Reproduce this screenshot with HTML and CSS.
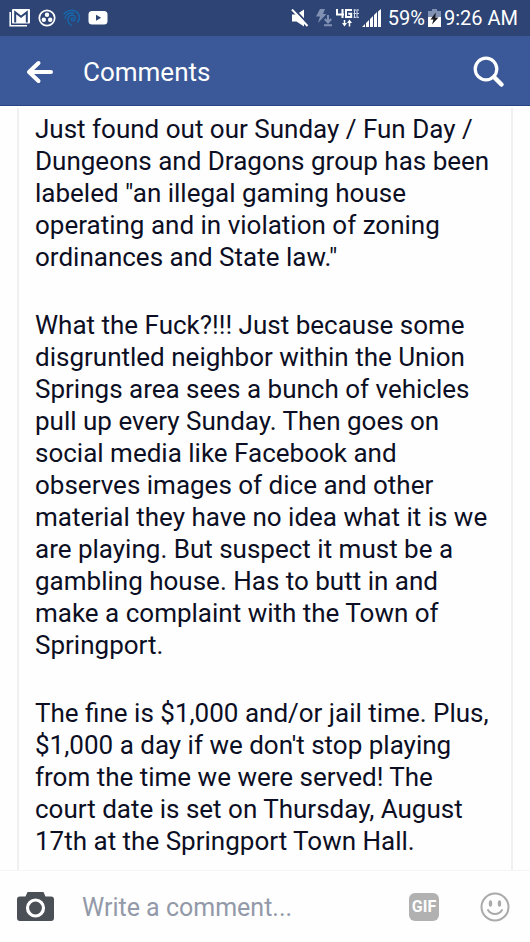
FILE: index.html
```
<!DOCTYPE html>
<html lang="en">
<head>
<meta charset="utf-8">
<meta name="viewport" content="width=device-width, initial-scale=1">
<title>Comments</title>
<link rel="stylesheet" href="styles.css">
</head>
<body>
<div class="status">
  <div class="status-group notices">
    <svg width="22" height="20" viewBox="0 0 22 20" aria-hidden="true"><path d="M1.2 4v13.8H18" fill="none" stroke="#fff" stroke-width="1.6"/><rect x="3" y="1" width="18" height="14.5" rx="1" fill="#fff"/><path d="M6.2 14.5V4.2l5.8 4.6 5.8-4.6v10.3" fill="none" stroke="#2d4474" stroke-width="2"/></svg>
    <svg width="18" height="18" viewBox="0 0 18 18" aria-hidden="true"><circle cx="9" cy="9" r="7.7" fill="none" stroke="#fff" stroke-width="1.7"/><g fill="#fff"><circle cx="9" cy="5.7" r="2.2"/><circle cx="5.8" cy="10.8" r="2.2"/><circle cx="12.2" cy="10.8" r="2.2"/></g></svg>
    <svg width="18" height="18" viewBox="0 0 18 18" aria-hidden="true"><g fill="none" stroke="#1767ae" stroke-width="1.4" stroke-linecap="round"><path d="M10 9.500c-.8-1-2.300 0-1.600 1.300 1 1.700 4 .8 3.900-1.700C12.200 6.200 8.500 5 6.200 7.200 3.500 9.800 4.800 14.500 8.500 16.500"/><path d="M1 5C3.500 1.500 8.500.3 12.500 2.200c4.300 2.200 5.300 8 2 11"/><path d="M2 9.500C2.500 5.500 6.500 2.800 10.500 4"/></g></svg>
    <svg width="20" height="16" viewBox="0 0 20 16" aria-hidden="true"><rect x=".5" y="1" width="19" height="13.500" rx="3.500" fill="#fff"/><path d="M8 4.800v6l5.200-3z" fill="#2d4474"/></svg>
  </div>
  <div class="status-group system">
    <svg width="18" height="18" viewBox="0 0 18 18" aria-hidden="true"><path d="M1 5.500h4.500L13 .5v17l-7.500-5H1z" fill="#fff"/><path d="M3 0 18 16" stroke="#2d4474" stroke-width="2"/><path d="M1 .5 16.500 17" stroke="#fff" stroke-width="2"/></svg>
    <svg class="power" width="17" height="18" viewBox="0 0 17 18" aria-hidden="true"><path d="M4 0h5L7 5h3.500L2 14l2-6.500H0z" fill="#8191b3"/><path d="M12 6v6M8.800 10l3.200 3.500 3.200-3.500M8 16.200h8" fill="none" stroke="#8191b3" stroke-width="2"/></svg>
    <svg width="23" height="18" viewBox="0 0 23 18" aria-hidden="true"><g fill="none" stroke="#fff" stroke-width="2"><path d="M1 0v5.500h7M6.500 0v9M16 1h-6v7h5.200V4.800h-3"/><path d="M8.500 11v4.500M13.500 17.500V13" stroke-width="1.500"/></g><path d="M6 14h5l-2.500 3.500zM11 14h5l-2.500-3.500z" fill="#fff"/><path d="M18.500.5v8.300M17.500 1H20M17.500 4.500H20M17.500 8.300H20M21 .5v8.300M20.700 1H23M20.700 4.500H23M20.700 8.300H23" stroke="#d5dced"/></svg>
    <svg width="19" height="18" viewBox="0 0 19 18" aria-hidden="true"><path d="M0 18h3v-3zM4 18h3v-7l-3 3zM8 18h3V7l-3 3zM12 18h3V3l-3 3zM16 18h3V0l-3 2.500z" fill="#fff"/></svg>
    <span class="percent">59%</span>
    <svg width="13" height="18" viewBox="0 0 13 18" aria-hidden="true"><path d="M4 0h5v2h4v7H0V2h4z" fill="#8191b3"/><path d="M0 8h13v10H0z" fill="#fff"/><path d="M7.800 3.500 2.500 10.500h3L4 15.500l6.500-7H7.300z" fill="#17191f"/></svg>
    <time>9:26 AM</time>
  </div>
</div>
<header class="bar">
  <button class="icon-button" type="button" aria-label="Back"><svg width="28" height="24" viewBox="0 0 28 24"><path d="M12.500 3 3 12l9.500 9M4 12h21" fill="none" stroke="#fff" stroke-width="4" stroke-linecap="round" stroke-linejoin="round"/></svg></button>
  <h1>Comments</h1>
  <button class="icon-button" type="button" aria-label="Search"><svg width="32" height="32" viewBox="0 0 32 32"><circle cx="13" cy="13" r="10.800" fill="none" stroke="#fff" stroke-width="3.200"/><path d="m21 21 7.500 7.500" stroke="#fff" stroke-width="4.500" stroke-linecap="round"/></svg></button>
</header>
<main class="feed">
  <article class="post">
    <p>Just found out our Sunday / Fun Day / Dungeons and Dragons group has been labeled "an illegal gaming house operating and in violation of zoning ordinances and State law."</p>
    <p>What the Fuck?!!! Just because some disgruntled neighbor within the Union Springs area sees a bunch of vehicles pull up every Sunday. Then goes on social media like Facebook and observes images of dice and other material they have no idea what it is we are playing. But suspect it must be a gambling house. Has to butt in and make a complaint with the Town of Springport.</p>
    <p>The fine is $1,000 and/or jail time. Plus, $1,000 a day if we don't stop playing from the time we were served! The court date is set on Thursday, August 17th at the Springport Town Hall.</p>
  </article>
</main>
<form class="composer">
  <button class="icon-button" type="button" aria-label="Add photo"><svg width="37" height="30" viewBox="0 0 37 30"><path d="M3 4.500h5.500L10.500 0h16l2 4.500H34q3 0 3 3V26q0 3-3 3H3q-3 0-3-3V7.500q0-3 3-3z" fill="#4b4f56"/><circle cx="18.500" cy="16" r="8" fill="none" stroke="#fff" stroke-width="3.200"/></svg></button>
  <input type="text" aria-label="Comment" placeholder="Write a comment...">
  <button class="gif" type="button">GIF</button>
  <button class="icon-button" type="button" aria-label="Stickers"><svg width="30" height="30" viewBox="0 0 30 30"><circle cx="15" cy="15" r="13.500" fill="none" stroke="#aaa" stroke-width="2"/><g fill="#aaa"><ellipse cx="10.500" cy="11.500" rx="1.700" ry="3.300"/><ellipse cx="19.500" cy="11.500" rx="1.700" ry="3.300"/></g><path d="M8 18c3 5.300 11 5.300 14 0" fill="none" stroke="#aaa" stroke-width="2" stroke-linecap="round"/></svg></button>
</form>
</body>
</html>
```
FILE: styles.css
```
* {
  box-sizing: border-box;
}

body {
  margin: 0;
  height: 100vh;
  display: flex;
  flex-direction: column;
  background: #fefefe;
  color: #0c0f24;
  font-family: Roboto, "Liberation Sans", sans-serif;
}

svg {
  display: block;
  flex: none;
}

button {
  margin: 0;
  padding: 0;
  border: 0;
  background: none;
  font: inherit;
}

.status {
  display: flex;
  flex: none;
  justify-content: space-between;
  align-items: center;
  padding: 8px 12px 8px 9px;
  background: #2d4474;
  color: #fff;
  font-size: 20px;
  line-height: 18px;
}

.status-group {
  display: flex;
  align-items: center;
}

.notices {
  gap: 7px;
}

.system {
  gap: 3px;
}

.power,
.percent {
  margin-left: 4px;
}

.bar {
  display: flex;
  flex: none;
  align-items: center;
  height: 70px;
  padding: 2px 25px 0 26px;
  background: #3b5998;
  border-bottom: 1px solid #254681;
  color: #fff;
}

.bar h1 {
  flex: 1;
  margin: 0 0 0 29px;
  font-size: 26px;
  font-weight: 400;
  line-height: 32px;
}

.feed {
  flex: 1;
  min-height: 0;
  overflow: hidden;
  padding: 2px 17px 0;
}

.post {
  height: 100%;
  padding: 5px 16px 0;
  border: solid #f0f0f2;
  border-width: 0 2px;
}

.post p {
  margin: 0 0 36px;
  font-size: 26px;
  line-height: 32px;
}

.composer {
  display: flex;
  flex: none;
  align-items: center;
  height: 72px;
  padding: 0 20px 0 17px;
  border-top: 1px solid #f5f5f5;
}

.composer input {
  flex: 1;
  min-width: 0;
  margin-left: 28px;
  padding: 2px 0 0;
  border: 0;
  outline: 0;
  background: none;
  color: inherit;
  font: inherit;
  font-size: 25px;
  line-height: 32px;
}

.composer input::placeholder {
  color: #9299a8;
  opacity: 1;
}

.gif {
  width: 30px;
  height: 28px;
  margin-right: 41px;
  border-radius: 6px;
  background: #b1b1b1;
  color: #fff;
  font-size: 16px;
  font-weight: 700;
  line-height: 28px;
}
```
